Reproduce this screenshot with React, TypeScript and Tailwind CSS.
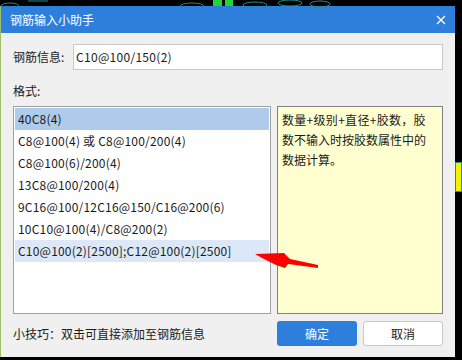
import React from "react";

const items = [
  "40C8(4)",
  "C8@100(4) 或 C8@100/200(4)",
  "C8@100(6)/200(4)",
  "13C8@100/200(4)",
  "9C16@100/12C16@150/C16@200(6)",
  "10C10@100(4)/C8@200(2)",
  "C10@100(2)[2500];C12@100(2)[2500]",
];

const font = { fontFamily: '"Microsoft YaHei", "Noto Sans CJK SC", sans-serif' };

const App: React.FC = () => {
  return (
    <div className="relative w-[462px] h-[360px] bg-black overflow-hidden text-[12px] text-[#1a1a1a]" style={font}>
      {/* background drawing strip */}
      <svg className="absolute left-0 top-0" width="462" height="8">
        <g fill="none" stroke="#1d8f8a" strokeWidth="1">
          <ellipse cx="10" cy="6" rx="9" ry="3" />
          <path d="M28 1 H48" />
          <ellipse cx="192" cy="6" rx="12" ry="3" />
          <ellipse cx="255" cy="5" rx="12" ry="3" />
          <ellipse cx="290" cy="3" rx="12" ry="3" />
          <ellipse cx="320" cy="4" rx="10" ry="3" />
        </g>
        <rect x="213" y="0" width="9" height="6" fill="#22d43a" />
        <rect x="225" y="0" width="8" height="6" fill="#22d43a" />
      </svg>
      <div className="absolute left-[455px] top-[162px] w-[7px] h-[30px] bg-[#f2f200] border border-[#1d8f8a]" />

      <div className="flex flex-col pt-[6px]">
        <div className="flex">
          <div className="w-[1px] h-[351px] bg-[#9fbf6a]" />
          <div className="w-[454px] h-[351px] bg-[#f0f0f0] flex flex-col">
            {/* title bar */}
            <div className="h-[27px] bg-[#2e7fdc] flex items-center justify-between pl-[9px] pr-[9px] text-white">
              <span>钢筋输入小助手</span>
              <svg width="10" height="10" viewBox="0 0 10 10">
                <path d="M1 1 L9 9 M9 1 L1 9" stroke="#fff" strokeWidth="1.4" />
              </svg>
            </div>

            <div className="flex flex-col px-[12px]">
              <div className="mt-[11px] h-[26px] flex items-center">
                <span className="w-[60px]">钢筋信息:</span>
                <div className="flex-1 h-[26px] bg-white border border-[#c8c8c8] flex items-center px-[2px] tracking-[0.3px]">
                  C10@100/150(2)
                </div>
              </div>

              <div className="mt-[13px] h-[16px] flex items-center">格式:</div>

              <div className="mt-[7px] flex gap-[6px] h-[208px]">
                <div className="w-[258px] bg-white border border-[#a0a0a0] pt-[1px] px-[1px]">
                  {items.map((t, i) => (
                    <div
                      key={t}
                      className={
                        "h-[22px] flex items-center pl-[3px] tracking-[0.2px] " +
                        (i === 0 ? "bg-[#aecbeb]" : i === 6 ? "bg-[#dce8f7]" : "")
                      }
                    >
                      {t}
                    </div>
                  ))}
                </div>
                <div className="w-[166px] bg-[#ffffd0] border border-[#808080] px-[4px] pt-[3px] leading-[20px]">
                  <div className="tracking-[0.3px]">数量+级别+直径+胶数，胶</div>
                  <div>数不输入时按胶数属性中的</div>
                  <div>数据计算。</div>
                </div>
              </div>

              <div className="mt-[7px] flex items-center h-[25px]">
                <span className="flex-1">小技巧：双击可直接添加至钢筋信息</span>
                <button className="w-[80px] h-[25px] rounded-[3px] bg-[#2e7fdc] text-white">确定</button>
                <button className="ml-[6px] w-[80px] h-[25px] rounded-[3px] bg-white border border-[#c8c8c8]">取消</button>
              </div>
            </div>
          </div>
        </div>
      </div>

      {/* red annotation arrow */}
      <svg className="absolute left-0 top-0 pointer-events-none" width="462" height="360">
        <polygon points="255,254 284,253 290,259 318,265 318,268 288,264 285,268 276,265 262,258" fill="#ff0000" />
      </svg>
    </div>
  );
};

export default App;
